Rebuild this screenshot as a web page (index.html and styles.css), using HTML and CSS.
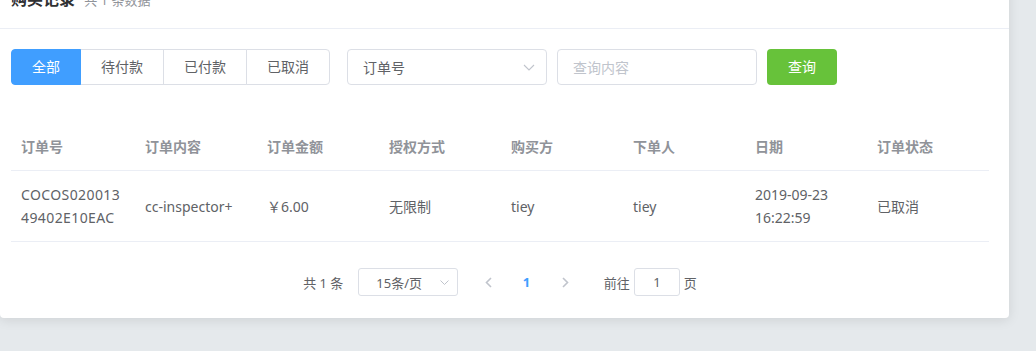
FILE: index.html
```html
<!DOCTYPE html>
<html lang="zh-CN">
<head>
  <meta charset="UTF-8" />
  <meta name="viewport" content="width=device-width, initial-scale=1.0"/>
  <title>购买记录</title>
  <link rel="stylesheet" href="styles.css">
</head>
<body>
  <div class="card">
    <div class="card-header">
      <span class="card-title">购买记录</span>
      <span class="card-sub">共 1 条数据</span>
    </div>
    <div class="card-body">
      <div class="toolbar">
        <div class="btn-group">
          <span class="btn activo">全部</span>
          <span class="btn">待付款</span>
          <span class="btn">已付款</span>
          <span class="btn">已取消</span>
        </div>
        <div class="select">
          <span>订单号</span>
          <svg class="arrow" width="12" height="7" viewBox="0 0 12 7"><polyline points="1,1 6,6 11,1" fill="none" stroke="#c0c4cc" stroke-width="1.1"/></svg>
        </div>
        <input type="text" class="buscador" placeholder="查询内容">
        <span class="btn-buscar">查询</span>
      </div>

      <table>
        <colgroup>
          <col style="width:124px"><col><col><col><col><col><col><col>
        </colgroup>
        <thead>
          <tr>
            <th>订单号</th><th>订单内容</th><th>订单金额</th><th>授权方式</th>
            <th>购买方</th><th>下单人</th><th>日期</th><th>订单状态</th>
          </tr>
        </thead>
        <tbody>
          <tr>
            <td class="codigo">COCOS02001349402E10EAC</td>
            <td>cc-inspector+</td>
            <td>￥6.00</td>
            <td>无限制</td>
            <td>tiey</td>
            <td>tiey</td>
            <td class="fecha">2019-09-23 16:22:59</td>
            <td>已取消</td>
          </tr>
        </tbody>
      </table>

      <div class="paginacion">
        <span class="total">共 1 条</span>
        <div class="sizes">
          <span>15条/页</span>
          <svg class="arrow-sm" width="9" height="5" viewBox="0 0 9 5"><polyline points="0.5,0.5 4.5,4.5 8.5,0.5" fill="none" stroke="#c0c4cc" stroke-width="1"/></svg>
        </div>
        <span class="btn-prev">
          <svg width="7" height="11" viewBox="0 0 7 11"><polyline points="6,1 1.5,5.5 6,10" fill="none" stroke="#c0c4cc" stroke-width="1.6"/></svg>
        </span>
        <span class="pager">1</span>
        <span class="btn-next">
          <svg width="7" height="11" viewBox="0 0 7 11"><polyline points="1,1 5.5,5.5 1,10" fill="none" stroke="#c0c4cc" stroke-width="1.6"/></svg>
        </span>
        <span class="jump">前往<span class="editor">1</span>页</span>
      </div>
    </div>
  </div>
</body>
</html>
```

FILE: styles.css
```css
body {
  margin: 0;
  font-family: "Noto Sans", "Noto Sans CJK SC", sans-serif;
  background-color: #e5e9ec;
  color: #606266;
  height: 351px;
  overflow: hidden;
}
.card {
  width: 1009px;
  margin-top: -30px;
  background-color: #ffffff;
  border-radius: 4px;
  box-shadow: 0 2px 12px 0 rgba(0, 0, 0, 0.1);
}
.card-header {
  padding: 18px 20px 18px 11px;
  height: 22px;
  line-height: 22px;
  border-bottom: 1px solid #ebeef5;
}
.card-title {
  font-size: 16px;
  font-weight: bold;
  color: #303133;
}
.card-sub {
  margin-left: 5px;
  font-size: 13px;
  color: #909399;
}
.card-body {
  padding: 20px 20px 20px 11px;
}
.toolbar {
  display: flex;
  align-items: center;
  height: 36px;
  margin-bottom: 38px;
}
.btn-group {
  display: flex;
}
.btn {
  display: inline-block;
  height: 34px;
  line-height: 34px;
  padding: 0 20px;
  font-size: 14px;
  color: #606266;
  background-color: #ffffff;
  border: 1px solid #dcdfe6;
  margin-left: -1px;
}
.btn:first-child {
  margin-left: 0;
  border-radius: 4px 0 0 4px;
}
.btn:last-child {
  border-radius: 0 4px 4px 0;
}
.btn.activo {
  background-color: #409eff;
  border-color: #409eff;
  color: #ffffff;
  position: relative;
}
.select {
  display: flex;
  align-items: center;
  justify-content: space-between;
  box-sizing: border-box;
  width: 200px;
  height: 36px;
  margin-left: 17px;
  padding: 0 11px 0 15px;
  border: 1px solid #dcdfe6;
  border-radius: 4px;
  font-size: 14px;
  color: #606266;
}
.buscador {
  box-sizing: border-box;
  width: 200px;
  height: 36px;
  margin: 0 0 0 10px;
  padding: 0 15px;
  border: 1px solid #dcdfe6;
  border-radius: 4px;
  font-family: inherit;
  font-size: 14px;
  outline: none;
}
.buscador::placeholder {
  color: #c0c4cc;
}
.btn-buscar {
  display: inline-block;
  width: 70px;
  height: 36px;
  line-height: 36px;
  margin-left: 10px;
  text-align: center;
  font-size: 14px;
  color: #ffffff;
  background-color: #67c23a;
  border-radius: 4px;
}
table {
  width: 978px;
  border-collapse: collapse;
  table-layout: fixed;
}
th, td {
  padding: 12px 10px;
  line-height: 23px;
  font-size: 14px;
  text-align: left;
  border-bottom: 1px solid #ebeef5;
}
th {
  color: #909399;
  font-weight: bold;
}
td {
  color: #606266;
}
td.codigo {
  word-break: break-all;
  letter-spacing: 0.4px;
}
.paginacion {
  display: flex;
  justify-content: center;
  align-items: center;
  height: 28px;
  padding: 2px 0;
  margin-top: 24px;
  font-size: 13px;
  color: #606266;
}
.total {
  margin-right: 15px;
}
.sizes {
  display: flex;
  align-items: center;
  justify-content: space-between;
  box-sizing: border-box;
  width: 100px;
  height: 28px;
  padding: 0 8px 0 17px;
  border: 1px solid #dcdfe6;
  border-radius: 3px;
  margin-right: 15px;
}
.btn-prev, .btn-next {
  display: flex;
  align-items: center;
  justify-content: center;
  box-sizing: border-box;
  width: 35.5px;
  height: 28px;
}
.btn-prev {
  padding: 0 12px 0 6px;
}
.btn-next {
  padding: 0 6px 0 12px;
}
.pager {
  width: 35.5px;
  text-align: center;
  color: #409eff;
  font-weight: bold;
  line-height: 28px;
}
.jump {
  display: flex;
  align-items: center;
  margin-left: 24px;
}
.editor {
  box-sizing: border-box;
  width: 46px;
  height: 28px;
  line-height: 26px;
  margin: 0 4px;
  text-align: center;
  border: 1px solid #dcdfe6;
  border-radius: 3px;
}
```
